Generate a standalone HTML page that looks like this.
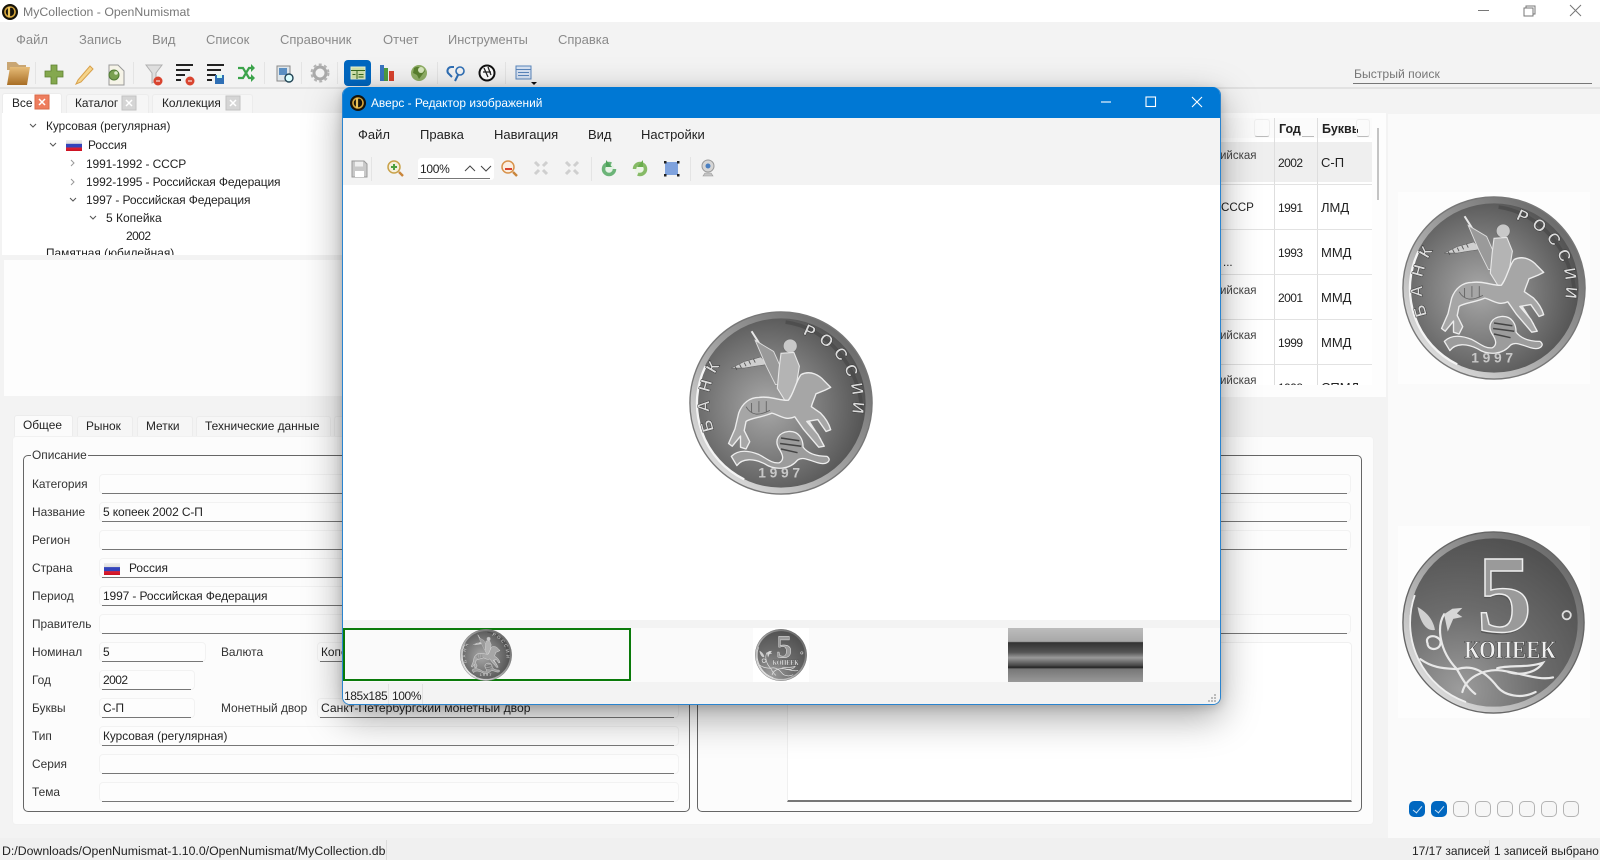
<!DOCTYPE html>
<html lang="ru"><head><meta charset="utf-8"><title>MyCollection - OpenNumismat</title>
<style>
html,body{margin:0;padding:0;width:1600px;height:860px;overflow:hidden;background:#f3f3f3}
body{position:relative;font-family:"Liberation Sans","Noto Sans CJK SC",sans-serif;font-size:11.9px;color:#222}
.t{position:absolute;white-space:nowrap;line-height:16px}
.a{position:absolute;box-sizing:border-box}
.m{color:#8a8a8a;font-size:13px}
.u{position:absolute;height:1px;background:#777}
.b{position:absolute;height:20px;border:1px solid #f2f2f2;border-radius:4px;box-sizing:border-box;background:#fdfdfd}
.l{color:#333}
.c{position:absolute;top:801px;width:16px;height:16px;border:1px solid #b4b4b4;border-radius:5px;box-sizing:border-box;background:#f6f6f6}
.c.on{background:#0067c0;border-color:#0067c0}
.c.on:after{content:"";position:absolute;left:5px;top:2px;width:4px;height:8px;border:solid #cfe3f5;border-width:0 1px 1px 0;transform:rotate(40deg)}
svg{position:absolute;left:0;top:0;overflow:visible}
.sep{position:absolute;width:1px;background:#e4e4e4}
.tab{position:absolute;box-sizing:border-box;background:#f6f6f6;border:1px solid #ececec;border-bottom:0;border-radius:3px 3px 0 0}
.rl{position:absolute;left:1220px;width:152px;height:1px;background:#e2e2e2}
.v{font-size:12px;letter-spacing:-.12px}
.d{font-size:12px;letter-spacing:-.55px}
.w{font-size:11.5px}
</style></head><body>
<svg width="0" height="0" style="position:absolute"><defs>
<linearGradient id="rim" x1="0.1" y1="0.9" x2="0.9" y2="0.1"><stop offset="0" stop-color="#e2e2e2"/><stop offset=".45" stop-color="#a4a4a4"/><stop offset="1" stop-color="#666"/></linearGradient>
<radialGradient id="f1" cx=".42" cy=".52" r=".62"><stop offset="0" stop-color="#a8a8a8"/><stop offset=".45" stop-color="#808080"/><stop offset="1" stop-color="#4e4e4e"/></radialGradient>
<radialGradient id="f2" cx=".3" cy=".9" r=".95"><stop offset="0" stop-color="#9c9c9c"/><stop offset=".5" stop-color="#6c6c6c"/><stop offset="1" stop-color="#505050"/></radialGradient>
<linearGradient id="gold" x1="0" y1="0" x2="0" y2="1"><stop offset="0" stop-color="#e6bc78"/><stop offset="1" stop-color="#a86e25"/></linearGradient>
<linearGradient id="flg" x1="0" y1="0" x2="0" y2="1"><stop offset="0" stop-color="#eee"/><stop offset=".33" stop-color="#ddd"/><stop offset=".36" stop-color="#3344bb"/><stop offset=".66" stop-color="#3344bb"/><stop offset=".7" stop-color="#dd2233"/><stop offset="1" stop-color="#cc1122"/></linearGradient>
<symbol id="obv" viewBox="0 0 200 200">
<circle cx="100" cy="100" r="99" fill="url(#rim)"/><circle cx="100" cy="100" r="99" fill="none" stroke="#777" stroke-width="1.5"/>
<circle cx="100" cy="100" r="92" fill="url(#f1)"/>
<path d="M18 60A92 92 0 0 0 60 183" fill="none" stroke="#f4f4f4" stroke-width="2.500"/>
<path d="M105 12C150 18 186 60 188 110" fill="none" stroke="#444" stroke-width="4" opacity=".6"/>
<path d="M46 62 60 55 78 50 86 58 72 60 60 62Z" fill="#cfcfcf" stroke="#555" stroke-width=".5"/>
<path d="M50 60l2 4M55 58l2 4M60 56l2 4M65 54l2 4M70 52l2 4" stroke="#555" stroke-width="1"/>
<path d="M68 22 143 140" stroke="#e8e8e8" stroke-width="2.200"/>
<path d="M72 32 92 44 100 62 104 80 94 80 84 60Z" fill="#9a9a9a" stroke="#ddd" stroke-width="1"/>
<circle cx="110" cy="38" r="7.500" fill="#c8c8c8" stroke="#666" stroke-width=".6"/>
<path d="M100 46 114 45 120 60 116 84 106 100 96 84 98 62Z" fill="#b4b4b4" stroke="#e6e6e6" stroke-width="1.200"/>
<path d="M54 111C58 100 66 94 76 94 88 92 100 98 108 97 114 90 116 76 122 69 132 64 142 70 147 76L154 83 148 86 138 90C136 96 134 100 133 104L143 111C148 116 152 122 154 129L149 131 140 118 128 120 140 134 147 147 141 148 124 128 115 115C105 120 96 112 90 111 78 116 68 116 62 120L60 130 66 142 62 150 56 148 56 136 47 147 43 144 50 128Z" fill="#a6a6a6" stroke="#ececec" stroke-width="1.500" stroke-linejoin="round"/>
<path d="M62 104c6 10 14 10 26 4M68 100v10M76 98v12M84 98v12" fill="none" stroke="#666" stroke-width="1"/>
<path d="M46 158C54 150 66 152 76 156 84 160 90 166 98 165 104 162 102 156 98 150 92 140 98 132 108 131 120 130 124 140 124 148 130 156 140 158 150 158 156 162 150 168 140 165 130 162 124 158 118 162 110 172 94 174 82 166 70 160 58 160 52 168Z" fill="#9c9c9c" stroke="#eee" stroke-width="1.400" stroke-linejoin="round"/>
<path d="M100 138l20 3M99 144l23 3M100 150l18 4" stroke="#444" stroke-width="1.600"/>
<path id="oa" d="M100 178A78 78 0 1 1 100 22A78 78 0 1 1 100 178" fill="none"/>
<text font-family="Liberation Sans,sans-serif" font-weight="bold" font-size="18" fill="#dcdcdc" stroke="#333" stroke-width=".5" letter-spacing="8"><textPath href="#oa" startOffset="92">БАНК</textPath></text>
<text font-family="Liberation Sans,sans-serif" font-weight="bold" font-size="18" fill="#dcdcdc" stroke="#333" stroke-width=".5" letter-spacing="6.500"><textPath href="#oa" startOffset="268">РОССИИ</textPath></text>
<text x="100" y="181" text-anchor="middle" font-family="Liberation Sans,sans-serif" font-weight="bold" font-size="15" letter-spacing="4" fill="#c8c8c8">1997</text>
</symbol>
<symbol id="rev" viewBox="0 0 200 200">
<circle cx="100" cy="100" r="99" fill="url(#rim)"/><circle cx="100" cy="100" r="99" fill="none" stroke="#666" stroke-width="1.500"/>
<circle cx="100" cy="100" r="92" fill="url(#f2)"/>
<path d="M14 70A92 92 0 0 0 70 187" fill="none" stroke="#eee" stroke-width="2"/>
<text x="112" y="111" text-anchor="middle" font-family="Liberation Serif,serif" font-weight="bold" font-size="120" fill="#555" transform="translate(-1 1)">5</text>
<text x="112" y="110" text-anchor="middle" font-family="Liberation Serif,serif" font-weight="bold" font-size="120" fill="#9a9a9a" stroke="#eee" stroke-width="1.600">5</text>
<text x="118" y="139" text-anchor="middle" font-family="Liberation Serif,serif" font-weight="bold" font-size="28" textLength="100" lengthAdjust="spacingAndGlyphs" fill="#f0f0f0" stroke="#333" stroke-width=".6">КОПЕЕК</text>
<g fill="none" stroke="#e8e8e8" stroke-width="2.400" stroke-linecap="round"><path d="M46 91C38 104 40 130 60 151 66 162 72 172 80 178"/><path d="M28 123C24 114 38 112 42 120 44 130 30 132 28 124"/><path d="M20 140C34 150 46 150 60 151 76 146 90 152 104 170 112 180 130 184 146 176"/><path d="M66 176C70 160 88 152 104 152 128 154 148 164 165 160"/><path d="M104 150C118 146 136 150 154 144 146 156 128 158 116 154"/></g>
<path d="M17 83C26 88 34 96 36 108 28 110 20 102 17 83Z" fill="#cfcfcf"/>
<path d="M46 91 55 85 66 84 60 90 66 94 56 96 50 110Z" fill="#d6d6d6"/>
<circle cx="180" cy="92" r="4.500" fill="none" stroke="#ddd" stroke-width="2"/>
</symbol>
<g id="logo"><circle r="8" fill="#16130a"/><circle r="5" fill="none" stroke="#d4a53c" stroke-width="1.600"/><path d="M-1-5v10" stroke="#e8c25a" stroke-width="2.200"/><path d="M1.500-4q3 2 1 7" fill="none" stroke="#16130a" stroke-width="1.200"/></g>
</defs></svg>

<!-- title bar -->
<div class="a" style="left:0;top:0;width:1600px;height:22px;background:#fff"></div>
<span class="t" style="left:23px;top:4px;font-size:12.300px;color:#777">MyCollection - OpenNumismat</span>

<!-- menu -->
<span class="t m" style="left:16px;top:32px">Файл</span>
<span class="t m" style="left:79px;top:32px">Запись</span>
<span class="t m" style="left:152px;top:32px">Вид</span>
<span class="t m" style="left:206px;top:32px">Список</span>
<span class="t m" style="left:280px;top:32px">Справочник</span>
<span class="t m" style="left:383px;top:32px">Отчет</span>
<span class="t m" style="left:448px;top:32px;font-size:12.800px">Инструменты</span>
<span class="t m" style="left:558px;top:32px">Справка</span>

<!-- toolbar -->
<div class="a" style="left:344px;top:60px;width:27px;height:26px;background:#0067c0;border-radius:4px"></div>
<div class="sep" style="left:35px;top:62px;height:22px"></div><div class="sep" style="left:133px;top:62px;height:22px"></div><div class="sep" style="left:264px;top:62px;height:22px"></div><div class="sep" style="left:301px;top:62px;height:22px"></div><div class="sep" style="left:337px;top:62px;height:22px"></div><div class="sep" style="left:437px;top:62px;height:22px"></div><div class="sep" style="left:505px;top:62px;height:22px"></div>
<div class="a" style="left:0;top:87px;width:1600px;height:2px;background:#e2e2e2"></div>
<span class="t" style="left:1354px;top:66px;font-size:12.200px;color:#777">Быстрый поиск</span>
<div class="u" style="left:1353px;top:83px;width:239px"></div>

<!-- top tabs -->
<div class="tab" style="left:2px;top:93px;width:60px;height:21px;background:#fff"></div>
<div class="tab" style="left:66px;top:94px;width:83px;height:19px"></div>
<div class="tab" style="left:152px;top:94px;width:101px;height:19px"></div>
<span class="t" style="left:12px;top:95px">Все</span>
<span class="t" style="left:75px;top:95px">Каталог</span>
<span class="t" style="left:162px;top:95px">Коллекция</span>

<!-- tree -->
<div class="a" style="left:2px;top:113px;width:345px;height:142px;background:#fff;overflow:hidden">
<span class="t" style="left:44px;top:5px;font-size:11.800px">Курсовая (регулярная)</span>
<span class="t" style="left:86px;top:24px">Россия</span>
<span class="t v" style="left:84px;top:43px">1991-1992 - СССР</span>
<span class="t v" style="left:84px;top:61px">1992-1995 - Российская Федерация</span>
<span class="t v" style="left:84px;top:79px">1997 - Российская Федерация</span>
<span class="t" style="left:104px;top:97px;font-size:12px">5 Копейка</span>
<span class="t d" style="left:124px;top:115px">2002</span>
<span class="t" style="left:44px;top:132px">Памятная (юбилейная)</span>
</div>
<div class="a" style="left:4px;top:260px;width:340px;height:136px;background:#fdfdfd"></div>

<!-- lower tabs -->
<div class="tab" style="left:14px;top:415px;width:59px;height:22px;background:#fbfbfb"></div>
<div class="tab" style="left:77px;top:416px;width:56px;height:20px"></div>
<div class="tab" style="left:137px;top:416px;width:56px;height:20px"></div>
<div class="tab" style="left:196px;top:416px;width:135px;height:20px"></div>
<div class="tab" style="left:334px;top:416px;width:40px;height:20px"></div>
<span class="t" style="left:23px;top:417px">Общее</span>
<span class="t" style="left:86px;top:418px">Рынок</span>
<span class="t" style="left:146px;top:418px">Метки</span>
<span class="t" style="left:205px;top:418px">Технические данные</span>
<div class="a" style="left:12px;top:436px;width:1362px;height:389px;background:#fcfcfc;border:1px solid #f1f1f1;border-radius:4px"></div>

<!-- group boxes -->
<div class="a" style="left:23px;top:455px;width:667px;height:357px;border:1px solid #666;border-radius:5px"></div>
<div class="a" style="left:697px;top:455px;width:665px;height:357px;border:1px solid #666;border-radius:5px"></div>
<span class="t l" style="left:31px;top:447px;background:#fcfcfc;padding:0 1px">Описание</span>

<!-- field boxes -->
<div class="b" style="left:99px;top:474px;width:580px"></div><div class="u" style="left:102px;top:493px;width:572px"></div>
<div class="b" style="left:99px;top:502px;width:580px"></div><div class="u" style="left:102px;top:521px;width:572px"></div>
<div class="b" style="left:99px;top:530px;width:580px"></div><div class="u" style="left:102px;top:549px;width:572px"></div>
<div class="b" style="left:99px;top:558px;width:580px"></div><div class="u" style="left:102px;top:577px;width:572px"></div>
<div class="b" style="left:99px;top:586px;width:580px"></div><div class="u" style="left:102px;top:605px;width:572px"></div>
<div class="b" style="left:99px;top:614px;width:580px"></div><div class="u" style="left:102px;top:633px;width:572px"></div>
<div class="b" style="left:99px;top:642px;width:107px"></div><div class="u" style="left:102px;top:661px;width:101px"></div>
<div class="b" style="left:99px;top:670px;width:96px"></div><div class="u" style="left:102px;top:689px;width:89px"></div>
<div class="b" style="left:99px;top:698px;width:96px"></div><div class="u" style="left:102px;top:717px;width:89px"></div>
<div class="b" style="left:317px;top:642px;width:362px"></div><div class="u" style="left:320px;top:661px;width:354px"></div>
<div class="b" style="left:317px;top:698px;width:362px"></div><div class="u" style="left:320px;top:717px;width:354px"></div>
<div class="b" style="left:99px;top:726px;width:580px"></div><div class="u" style="left:102px;top:745px;width:572px"></div>
<div class="b" style="left:99px;top:754px;width:580px"></div><div class="u" style="left:102px;top:773px;width:572px"></div>
<div class="b" style="left:99px;top:782px;width:580px"></div><div class="u" style="left:102px;top:801px;width:572px"></div>

<span class="t l" style="left:32px;top:476px">Категория</span>
<span class="t l" style="left:32px;top:504px">Название</span>
<span class="t l" style="left:32px;top:532px">Регион</span>
<span class="t l" style="left:32px;top:560px">Страна</span>
<span class="t l" style="left:32px;top:588px">Период</span>
<span class="t l" style="left:32px;top:616px">Правитель</span>
<span class="t l" style="left:32px;top:644px">Номинал</span>
<span class="t l" style="left:32px;top:672px">Год</span>
<span class="t l" style="left:32px;top:700px">Буквы</span>
<span class="t l" style="left:32px;top:728px">Тип</span>
<span class="t l" style="left:32px;top:756px">Серия</span>
<span class="t l" style="left:32px;top:784px">Тема</span>
<span class="t l" style="left:221px;top:644px">Валюта</span>
<span class="t l" style="left:221px;top:700px">Монетный двор</span>
<span class="t v" style="left:103px;top:504px">5 копеек 2002 С-П</span>
<span class="t" style="left:129px;top:560px">Россия</span>
<span class="t v" style="left:103px;top:588px">1997 - Российская Федерация</span>
<span class="t" style="left:103px;top:644px">5</span>
<span class="t" style="left:321px;top:644px">Копейка</span>
<span class="t d" style="left:103px;top:672px">2002</span>
<span class="t" style="left:103px;top:700px">С-П</span>
<span class="t" style="left:321px;top:700px;font-size:12.150px">Санкт-Петербургский монетный двор</span>
<span class="t" style="left:103px;top:728px;font-size:11.800px">Курсовая (регулярная)</span>

<!-- right group fields -->
<div class="b" style="left:1215px;top:474px;width:136px"></div><div class="u" style="left:1190px;top:493px;width:157px"></div>
<div class="b" style="left:1215px;top:502px;width:136px"></div><div class="u" style="left:1190px;top:521px;width:157px"></div>
<div class="b" style="left:1215px;top:530px;width:136px"></div><div class="u" style="left:1190px;top:549px;width:157px"></div>
<div class="b" style="left:1215px;top:614px;width:136px"></div><div class="u" style="left:1190px;top:633px;width:157px"></div>
<div class="a" style="left:787px;top:642px;width:565px;height:160px;background:#fff;border:1px solid #f0f0f0;border-bottom:2px solid #777;border-radius:4px 4px 0 0"></div>

<!-- table -->
<div class="a" style="left:1200px;top:113px;width:186px;height:284px;background:#fdfdfd"></div>
<div class="a" style="left:1220px;top:118px;width:152px;height:267px;overflow:hidden;background:#fff">
<div class="a" style="left:0;top:0;width:152px;height:20px;background:#fbfbfb"></div>
<div class="a" style="left:0;top:24px;width:152px;height:40px;background:#efefef"></div>
<span class="t w" style="left:0;top:30px;color:#444">ийская</span>
<span class="t" style="left:1px;top:82px;font-size:11.600px">СССР</span>
<span class="t w" style="left:3px;top:137px">...</span>
<span class="t w" style="left:0;top:165px;color:#444">ийская</span>
<span class="t w" style="left:0;top:210px;color:#444">ийская</span>
<span class="t w" style="left:0;top:255px;color:#444">ийская</span>
<span class="t" style="left:59px;top:3px;font-weight:bold;font-size:12.500px">Год</span>
<span class="t" style="left:102px;top:3px;font-weight:bold;font-size:12.500px;width:36px;overflow:hidden">Буквы</span>
<span class="t d" style="left:58px;top:37px">2002</span><span class="t" style="left:101px;top:37px;font-size:13px">С-П</span>
<span class="t d" style="left:58px;top:82px">1991</span><span class="t" style="left:101px;top:82px;font-size:13px">ЛМД</span>
<span class="t d" style="left:58px;top:127px">1993</span><span class="t" style="left:101px;top:127px;font-size:13px">ММД</span>
<span class="t d" style="left:58px;top:172px">2001</span><span class="t" style="left:101px;top:172px;font-size:13px">ММД</span>
<span class="t d" style="left:58px;top:217px">1999</span><span class="t" style="left:101px;top:217px;font-size:13px">ММД</span>
<span class="t d" style="left:58px;top:262px">1998</span><span class="t" style="left:101px;top:262px;font-size:13px">СПМД</span>
<div class="a" style="left:54px;top:0;width:1px;height:267px;background:#dedede"></div>
<div class="a" style="left:97px;top:0;width:1px;height:267px;background:#dedede"></div>
<div class="a" style="left:34px;top:1px;width:16px;height:18px;border:1px solid #efefef;border-bottom-color:#bbb;border-radius:3px"></div>
<div class="a" style="left:82px;top:8px;width:12px;height:11px;border-bottom:1px solid #bbb"></div>
<div class="a" style="left:136px;top:1px;width:14px;height:18px;border:1px solid #efefef;border-bottom-color:#bbb;border-radius:3px"></div>
</div>
<div class="rl" style="top:184px"></div><div class="rl" style="top:229px"></div><div class="rl" style="top:274px"></div><div class="rl" style="top:319px"></div><div class="rl" style="top:364px"></div>
<div class="a" style="left:1377px;top:128px;width:2px;height:72px;background:#c4c4c4"></div>

<!-- image panel -->
<div class="a" style="left:1388px;top:114px;width:212px;height:724px;background:#fafafa"></div>
<div class="a" style="left:1398px;top:192px;width:192px;height:192px;background:#fdfdfd"></div>
<div class="a" style="left:1398px;top:526px;width:192px;height:192px;background:#fdfdfd"></div>
<svg style="left:1401.5px;top:196px" width="184" height="184"><use href="#obv"/></svg>
<svg style="left:1402px;top:531px" width="183" height="183"><use href="#rev"/></svg>
<div class="c on" style="left:1409px"></div><div class="c on" style="left:1431px"></div><div class="c" style="left:1453px"></div><div class="c" style="left:1475px"></div><div class="c" style="left:1497px"></div><div class="c" style="left:1519px"></div><div class="c" style="left:1541px"></div><div class="c" style="left:1563px"></div>

<!-- status bar -->
<div class="a" style="left:0;top:838px;width:1600px;height:22px;background:#f0f0f0"></div>
<span class="t" style="left:2px;top:843px;font-size:12.300px">D:/Downloads/OpenNumismat-1.10.0/OpenNumismat/MyCollection.db</span>
<div class="sep" style="left:386px;top:840px;height:20px;background:#dcdcdc"></div>
<span class="t" style="left:1412px;top:843px;font-size:12px">17/17 записей</span>
<div class="sep" style="left:1489px;top:840px;height:20px;background:#dcdcdc"></div>
<span class="t" style="left:1494px;top:843px;font-size:11.800px">1 записей выбрано</span>

<!-- main window icons -->
<svg width="1600" height="860">
<use href="#logo" x="10" y="12"/>
<g stroke="#777" fill="none"><path d="M1478 10.500h11"/><rect x="1524" y="8" width="9" height="8"/><path d="M1526 8V6h9v8h-2"/><path d="M1570 5l11 11M1581 5l-11 11"/></g>
<!-- folder -->
<path d="M7 62h9l3 3h7v5H7Z" fill="#c9a673"/><path d="M10 67h20l-3 18H7Z" fill="url(#gold)"/>
<!-- plus -->
<path d="M51 65h6v6h6v6h-6v7h-6v-7h-6v-6h6Z" fill="#84a84e" stroke="#5e8030" stroke-width=".8"/>
<!-- pencil -->
<path d="M78 80 90 66l3 3-12 13-5 2Z" fill="#f5d48a" stroke="#d8a04a"/>
<!-- doc globe -->
<path d="M109 65h9l6 6v14h-15Z" fill="#f6f4e8" stroke="#999"/><circle cx="114" cy="75" r="5" fill="#79a050" stroke="#4f7a36"/><circle cx="116" cy="73" r="1.800" fill="#dbe8c8"/>
<!-- filter -->
<path d="M146 65h16l-6 8v8l-4 2V73Z" fill="#dedede" stroke="#b0b0b0"/><circle cx="158" cy="81" r="4.500" fill="#d9442f"/><path d="M156 81h4" stroke="#fff"/>
<!-- sort x -->
<path d="M176 65h17M176 70h14M176 75h9M176 80h5" stroke="#222" stroke-width="2"/><circle cx="190" cy="81" r="4.500" fill="#d9442f"/><path d="M188 81h4" stroke="#fff"/>
<!-- sort save -->
<path d="M207 65h17M207 70h14M207 75h9M207 80h5" stroke="#222" stroke-width="2"/><rect x="215" y="75" width="9" height="9" fill="#2f6fb5"/><rect x="217" y="75" width="5" height="3" fill="#cfe"/>
<!-- shuffle -->
<path d="M238 68h5l6 10h3M238 78h5l6-10h3" fill="none" stroke="#3ba34a" stroke-width="2.200"/><path d="M251 64l4 4-4 4ZM251 74l4 4-4 4Z" fill="#3ba34a"/>
<!-- image search -->
<rect x="277" y="66" width="13" height="15" fill="#dfe6ea" stroke="#888"/><rect x="279" y="68" width="8" height="7" fill="#5c8fc2"/><circle cx="289" cy="78" r="4" fill="#dff" stroke="#245"  stroke-width="1.400"/>
<!-- gear -->
<circle cx="320" cy="73" r="6" fill="none" stroke="#aaa" stroke-width="3"/><circle cx="320" cy="73" r="8.500" fill="none" stroke="#b4b4b4" stroke-width="2" stroke-dasharray="3 2.500"/>
<!-- table selected -->
<rect x="351" y="67" width="14" height="12" fill="#cfe0a8" stroke="#e8f0d0"/><path d="M351 70.500h14M357 70.500V79M352.500 74.500h3M358.500 74.500h5M358.500 77h5" stroke="#386a20"/>
<!-- bars -->
<rect x="380" y="65" width="4" height="16" fill="#3a74c0"/><rect x="384" y="68" width="4" height="13" fill="#4f9c40"/><rect x="389" y="71" width="5" height="10" fill="#d8422e"/>
<!-- globe -->
<circle cx="419" cy="73" r="8" fill="#8fae66"/><path d="M414 68c3-2 6-1 8 0l3 3-3 4-3 4-2-4-4-2Z" fill="#5a8030"/><circle cx="421" cy="70" r="3" fill="#d7e6bd"/>
<!-- link -->
<path d="M451 67a4 4 0 0 0-3 6l4 4" fill="none" stroke="#2f6fb5" stroke-width="2"/><path d="M451 67h3" stroke="#2f6fb5" stroke-width="2"/><circle cx="460" cy="71" r="4" fill="none" stroke="#2f6fb5" stroke-width="1.600"/><path d="M458 75l-3 6" stroke="#2f6fb5" stroke-width="2"/>
<!-- clock/badge -->
<circle cx="487" cy="73" r="7.500" fill="#fff" stroke="#111" stroke-width="2"/><path d="M484 68l4 9M488 67l3 8M483 72h8" stroke="#222" stroke-width="1.300"/>
<!-- list -->
<rect x="516" y="66" width="15" height="13" fill="#d7e2f2" stroke="#5a86bc"/><path d="M516 69.500h15M518 72.500h11M518 75.500h11" stroke="#5a86bc"/><path d="M531 82h6l-3 3Z" fill="#111"/>
<!-- tab closes -->
<rect x="35" y="95" width="14" height="14" fill="#ee7d5e" stroke="#d86a48"/><path d="M39 99l6 6M45 99l-6 6" stroke="#fff" stroke-width="1.500"/>
<rect x="122" y="96" width="14" height="14" fill="#d5d5d5" stroke="#c2c2c2"/><path d="M126 100l6 6M132 100l-6 6" stroke="#fff" stroke-width="1.500"/>
<rect x="226" y="96" width="14" height="14" fill="#d5d5d5" stroke="#c2c2c2"/><path d="M230 100l6 6M236 100l-6 6" stroke="#fff" stroke-width="1.500"/>
<!-- tree arrows -->
<g fill="none" stroke="#555"><path d="M30 124l3 3 3-3"/><path d="M50 143l3 3 3-3"/><path d="M71 160l3 3-3 3" stroke="#999"/><path d="M71 179l3 3-3 3" stroke="#999"/><path d="M70 198l3 3 3-3"/><path d="M90 216l3 3 3-3"/></g>
<rect x="66" y="140" width="16" height="11" fill="url(#flg)"/>
<rect x="104" y="563" width="16" height="12" fill="url(#flg)"/>
</svg>

<!-- modal -->
<div class="a" style="left:342px;top:87px;width:879px;height:618px;background:#fff;border:1px solid #2a84cf;border-top:0;border-radius:8px;box-shadow:0 12px 38px rgba(0,0,0,.36),0 2px 10px rgba(0,0,0,.16);overflow:hidden">
<div class="a" style="left:-1px;top:0;width:879px;height:31px;background:#0078d4"></div>
<span class="t" style="left:28px;top:8px;color:#fff;font-size:11.900px">Аверс - Редактор изображений</span>
<div class="a" style="left:0;top:31px;width:878px;height:67px;background:#f3f3f3"></div>
<span class="t" style="left:15px;top:40px;font-size:13px">Файл</span>
<span class="t" style="left:77px;top:40px;font-size:13px">Правка</span>
<span class="t" style="left:151px;top:40px;font-size:13px">Навигация</span>
<span class="t" style="left:245px;top:40px;font-size:13px">Вид</span>
<span class="t" style="left:298px;top:40px;font-size:13px">Настройки</span>
<div class="a" style="left:75px;top:71px;width:76px;height:22px;background:#fff;border-radius:3px"></div>
<div class="a" style="left:75px;top:91px;width:72px;height:1px;background:#777"></div>
<span class="t" style="left:77px;top:74px;font-size:12px;letter-spacing:-.3px">100%</span>
<div class="sep" style="left:28px;top:70px;height:24px"></div><div class="sep" style="left:248px;top:70px;height:24px"></div><div class="sep" style="left:347px;top:70px;height:24px"></div>
<svg style="left:346px;top:224px" width="184" height="184"><use href="#obv"/></svg>
<div class="a" style="left:0;top:533px;width:878px;height:8px;background:#f3f3f3"></div>
<div class="a" style="left:0;top:541px;width:878px;height:54px;background:#fafafa"></div>
<div class="a" style="left:0;top:541px;width:288px;height:53px;border:2px solid #0a7a0a"></div>
<svg style="left:117px;top:542px" width="52" height="52"><use href="#obv"/></svg>
<div class="a" style="left:410px;top:541px;width:56px;height:54px;background:#fff"></div>
<svg style="left:412px;top:542px" width="52" height="52"><use href="#rev"/></svg>
<div class="a" style="left:665px;top:541px;width:135px;height:54px;background:linear-gradient(180deg,#bcbcbc 0,#a8a8a8 25%,#333 27%,#555 45%,#999 55%,#444 70%,#222 73%,#777 76%,#999 100%)"></div>
<div class="a" style="left:0;top:595px;width:878px;height:23px;background:#f3f3f3"></div>
<span class="t" style="left:1px;top:601px;font-size:12px;letter-spacing:-.4px">185x185</span>
<div class="sep" style="left:45px;top:597px;height:20px;background:#e2e2e2"></div>
<span class="t" style="left:49px;top:601px;font-size:12px;letter-spacing:-.4px">100%</span>
<div class="sep" style="left:79px;top:597px;height:20px;background:#e2e2e2"></div>
</div>

<!-- modal icons -->
<svg width="1600" height="860">
<use href="#logo" x="358" y="103"/>
<g stroke="#fff" fill="none" stroke-width="1.100"><path d="M1101 102h10"/><rect x="1146" y="97" width="9.500" height="9.500"/><path d="M1192 97l10 10M1202 97l-10 10"/></g>
<!-- save -->
<path d="M352 161h12l3 3v13h-15Z" fill="#c9c9c9" stroke="#9a9a9a"/><rect x="355" y="161.500" width="8" height="5" fill="#efefef"/><rect x="355" y="171" width="9" height="6" fill="#fff"/>
<!-- zoom in -->
<circle cx="394" cy="167" r="6" fill="#f5efdc" stroke="#c9a24a" stroke-width="1.500"/><path d="M399 172l4 4" stroke="#c9853a" stroke-width="2.400"/><path d="M394 164v6M391 167h6" stroke="#4ca040" stroke-width="2"/>
<!-- spin arrows -->
<path d="M465 171l5-5 5 5M481 166l5 5 5-5" fill="none" stroke="#444"/>
<!-- zoom out -->
<circle cx="508" cy="167" r="6" fill="#fbeee0" stroke="#d8924a" stroke-width="1.500"/><path d="M513 172l4 4" stroke="#c9853a" stroke-width="2.400"/><path d="M505 169h7" stroke="#d8422e" stroke-width="2"/>
<!-- fit -->
<g fill="none" stroke="#cfcfcf" stroke-width="3"><path d="M535 162l4 4M547 162l-4 4M535 174l4-4M547 174l-4-4"/><path d="M566 162l4 4M578 162l-4 4M566 174l4-4M578 174l-4-4"/></g>
<!-- rotate -->
<circle cx="609" cy="169" r="5.500" fill="#e6f2e6" stroke="#6cb478" stroke-width="3.500" stroke-dasharray="28 7"/><path d="M606 160v7h6Z" fill="#4fa35b"/>
<circle cx="640" cy="169" r="5.500" fill="#ecf4e6" stroke="#86ba66" stroke-width="3.500" stroke-dasharray="28 7" transform="rotate(180 640 169)"/><path d="M643 160v7h-6Z" fill="#6aad4c"/>
<!-- rect -->
<rect x="665" y="162" width="13" height="13" fill="#7fa2dd"/><g fill="#222"><rect x="664" y="161" width="2.500" height="2.500"/><rect x="677" y="161" width="2.500" height="2.500"/><rect x="664" y="174" width="2.500" height="2.500"/><rect x="677" y="174" width="2.500" height="2.500"/></g>
<!-- webcam -->
<circle cx="708" cy="166" r="6" fill="#d6d6d6" stroke="#999"/><circle cx="708" cy="166" r="2.500" fill="#4a7fc0"/><path d="M703 176h10l-2-3h-6Z" fill="#c4c4c4" stroke="#999" stroke-width=".6"/>
<!-- grip -->
<g fill="#bbb"><rect x="1214" y="694" width="2" height="2"/><rect x="1211" y="697" width="2" height="2"/><rect x="1214" y="697" width="2" height="2"/><rect x="1208" y="700" width="2" height="2"/><rect x="1211" y="700" width="2" height="2"/><rect x="1214" y="700" width="2" height="2"/></g>
</svg>
</body></html>
